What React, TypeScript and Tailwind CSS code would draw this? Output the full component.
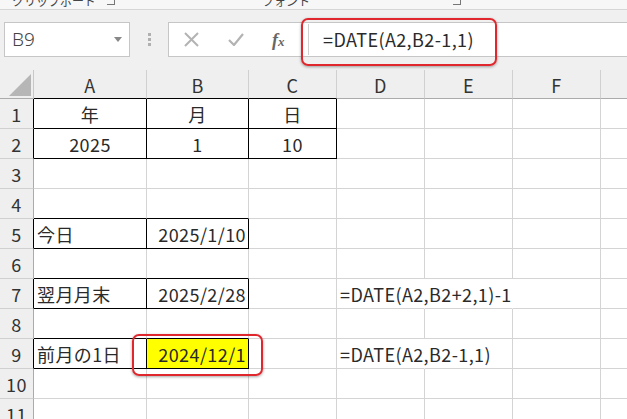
import React from "react";

const COLS = [
  { key: "A", w: "w-[113px]" },
  { key: "B", w: "w-[102px]" },
  { key: "C", w: "w-[88px]" },
  { key: "D", w: "w-[88px]" },
  { key: "E", w: "w-[88px]" },
  { key: "F", w: "w-[88px]" },
  { key: "", w: "w-[88px]" },
];

type Cell = { text?: string; align?: "left" | "center" | "right"; fill?: boolean; spill?: boolean };

const DATA: Record<number, Record<number, Cell>> = {
  1: { 0: { text: "年", align: "center" }, 1: { text: "月", align: "center" }, 2: { text: "日", align: "center" } },
  2: { 0: { text: "2025", align: "center" }, 1: { text: "1", align: "center" }, 2: { text: "10", align: "center" } },
  5: { 0: { text: "今日" }, 1: { text: "2025/1/10", align: "right" } },
  7: { 0: { text: "翌月月末" }, 1: { text: "2025/2/28", align: "right" }, 3: { text: "=DATE(A2,B2+2,1)-1", spill: true } },
  9: { 0: { text: "前月の1日" }, 1: { text: "2024/12/1", align: "right", fill: true }, 3: { text: "=DATE(A2,B2-1,1)", spill: true } },
};

// cells with thin black borders
const boxed = (r: number, c: number) =>
  ((r === 1 || r === 2) && c <= 2) || ((r === 5 || r === 7 || r === 9) && c <= 1);

// gridlines hidden where formula text runs over
const noRight = (r: number, c: number) => (r === 7 && (c === 3 || c === 4)) || (r === 9 && c === 3);

const ROWS = Array.from({ length: 11 }, (_, i) => i + 1);

const GridCell = ({ r, c }: { r: number; c: number }) => {
  const cell = DATA[r]?.[c];
  const right = boxed(r, c) || boxed(r, c + 1)
    ? "border-r-black"
    : noRight(r, c)
      ? "border-r-transparent"
      : "border-r-[#d4d4d4]";
  const bottom = boxed(r, c) || boxed(r + 1, c) ? "border-b-black" : "border-b-[#d4d4d4]";
  const align =
    cell?.align === "center" ? "justify-center" : cell?.align === "right" ? "justify-end pr-[2px]" : "justify-start pl-[3px]";
  return (
    <div
      className={`relative flex h-[30px] shrink-0 items-center border-r border-b ${right} ${bottom} ${
        COLS[c].w
      } ${align} ${cell?.fill ? "bg-[#ffff00]" : "bg-white"} ${cell?.spill ? "z-10 overflow-visible" : ""}`}
    >
      {cell?.text && <span className="whitespace-nowrap pt-[1px]">{cell.text}</span>}
    </div>
  );
};

export default function App() {
  return (
    <div className="relative h-[419px] w-[627px] overflow-hidden bg-white font-['Noto_Sans_CJK_JP',sans-serif] text-[18px] tracking-[0.4px] text-[#2a2a2a]">
      {/* ribbon group labels, cut off at the top */}
      <div className="relative h-[10px] overflow-hidden border-b border-[#d6d6d6] bg-[#f7f7f7] text-[12px] leading-none tracking-normal text-[#444]">
        <span className="absolute left-[12px] top-[-5px]">クリップボード</span>
        <span className="absolute left-[107px] top-[-3px] h-[8px] w-[8px] border-r border-b border-[#777]" />
        <span className="absolute left-[262px] top-[-5px]">フォント</span>
        <span className="absolute left-[453px] top-[-3px] h-[8px] w-[8px] border-r border-b border-[#777]" />
      </div>

      {/* formula bar */}
      <div className="relative flex h-[60px] items-start bg-[#f0f0f0] pt-[12px]">
        <div className="ml-[4px] flex h-[35px] w-[126px] items-center justify-between border border-[#c6c6c6] bg-white pl-[7px] pr-[7px]">
          <span className="font-['Noto_Sans',sans-serif] text-[19px] font-light tracking-normal text-[#444]">B9</span>
          <svg width="8" height="5" viewBox="0 0 8 5">
            <path d="M0 0h8L4 5z" fill="#888" />
          </svg>
        </div>
        <div className="flex h-[35px] w-[38px] flex-col items-center justify-center gap-[2px]">
          <span className="h-[3px] w-[3px] bg-[#b0b0b0]" />
          <span className="h-[3px] w-[3px] bg-[#b0b0b0]" />
          <span className="h-[3px] w-[3px] bg-[#b0b0b0]" />
        </div>
        <div className="flex h-[35px] flex-1 items-center border border-r-0 border-[#c6c6c6] bg-white">
          <div className="flex w-[139px] items-center">
            <svg className="ml-[15px]" width="15" height="15" viewBox="0 0 15 15">
              <path d="M1 1l13 13M14 1L1 14" stroke="#b3b3b3" strokeWidth="2" />
            </svg>
            <svg className="ml-[29px]" width="16" height="13" viewBox="0 0 16 13">
              <path d="M1 7l5 5L15 1" stroke="#b3b3b3" strokeWidth="2.2" fill="none" />
            </svg>
            <span className="ml-[28px] font-['Liberation_Serif',serif] text-[18px] font-bold italic leading-none tracking-normal text-[#666]">
              f<span className="text-[13px]">x</span>
            </span>
          </div>
          <div className="h-[31px] w-px bg-[#d0d0d0]" />
          <span className="ml-[14px] whitespace-nowrap">=DATE(A2,B2-1,1)</span>
        </div>
      </div>

      {/* sheet */}
      <div className="flex flex-col">
        <div className="flex h-[29px] bg-[#efefef]">
          <div className="relative w-[34px] shrink-0 border-r border-b border-r-[#c8c8c8] border-b-[#ababab]">
            <svg className="absolute left-[9px] top-[4px]" width="23" height="23" viewBox="0 0 23 23">
              <path d="M22 0v22H0z" fill="#b6b6b6" />
            </svg>
          </div>
          {COLS.map((col, c) => (
            <div
              key={c}
              className={`flex shrink-0 items-center justify-center border-r border-b border-r-[#d0d0d0] pt-[2px] text-[#333] ${col.w} ${
                boxed(1, c) ? "border-b-black" : "border-b-[#ababab]"
              }`}
            >
              {col.key}
            </div>
          ))}
        </div>
        {ROWS.map((r) => (
          <div key={r} className="flex">
            <div
              className={`flex h-[30px] w-[34px] shrink-0 items-center justify-center border-r border-b border-b-[#d0d0d0] bg-[#efefef] pt-[2px] text-[#333] ${
                boxed(r, 0) ? "border-r-black" : "border-r-[#ababab]"
              }`}
            >
              {r}
            </div>
            {COLS.map((col, c) => (
              <GridCell key={c} r={r} c={c} />
            ))}
          </div>
        ))}
      </div>

      {/* red highlight frames */}
      <div className="absolute left-[301px] top-[18px] h-[48px] w-[196px] rounded-[7px] border-2 border-[#e0272d] shadow-[0_1px_3px_rgba(0,0,0,0.35)]" />
      <div className="absolute left-[132px] top-[334px] h-[42px] w-[131px] rounded-[7px] border-2 border-[#e0272d] shadow-[0_1px_3px_rgba(0,0,0,0.35)]" />
    </div>
  );
}
